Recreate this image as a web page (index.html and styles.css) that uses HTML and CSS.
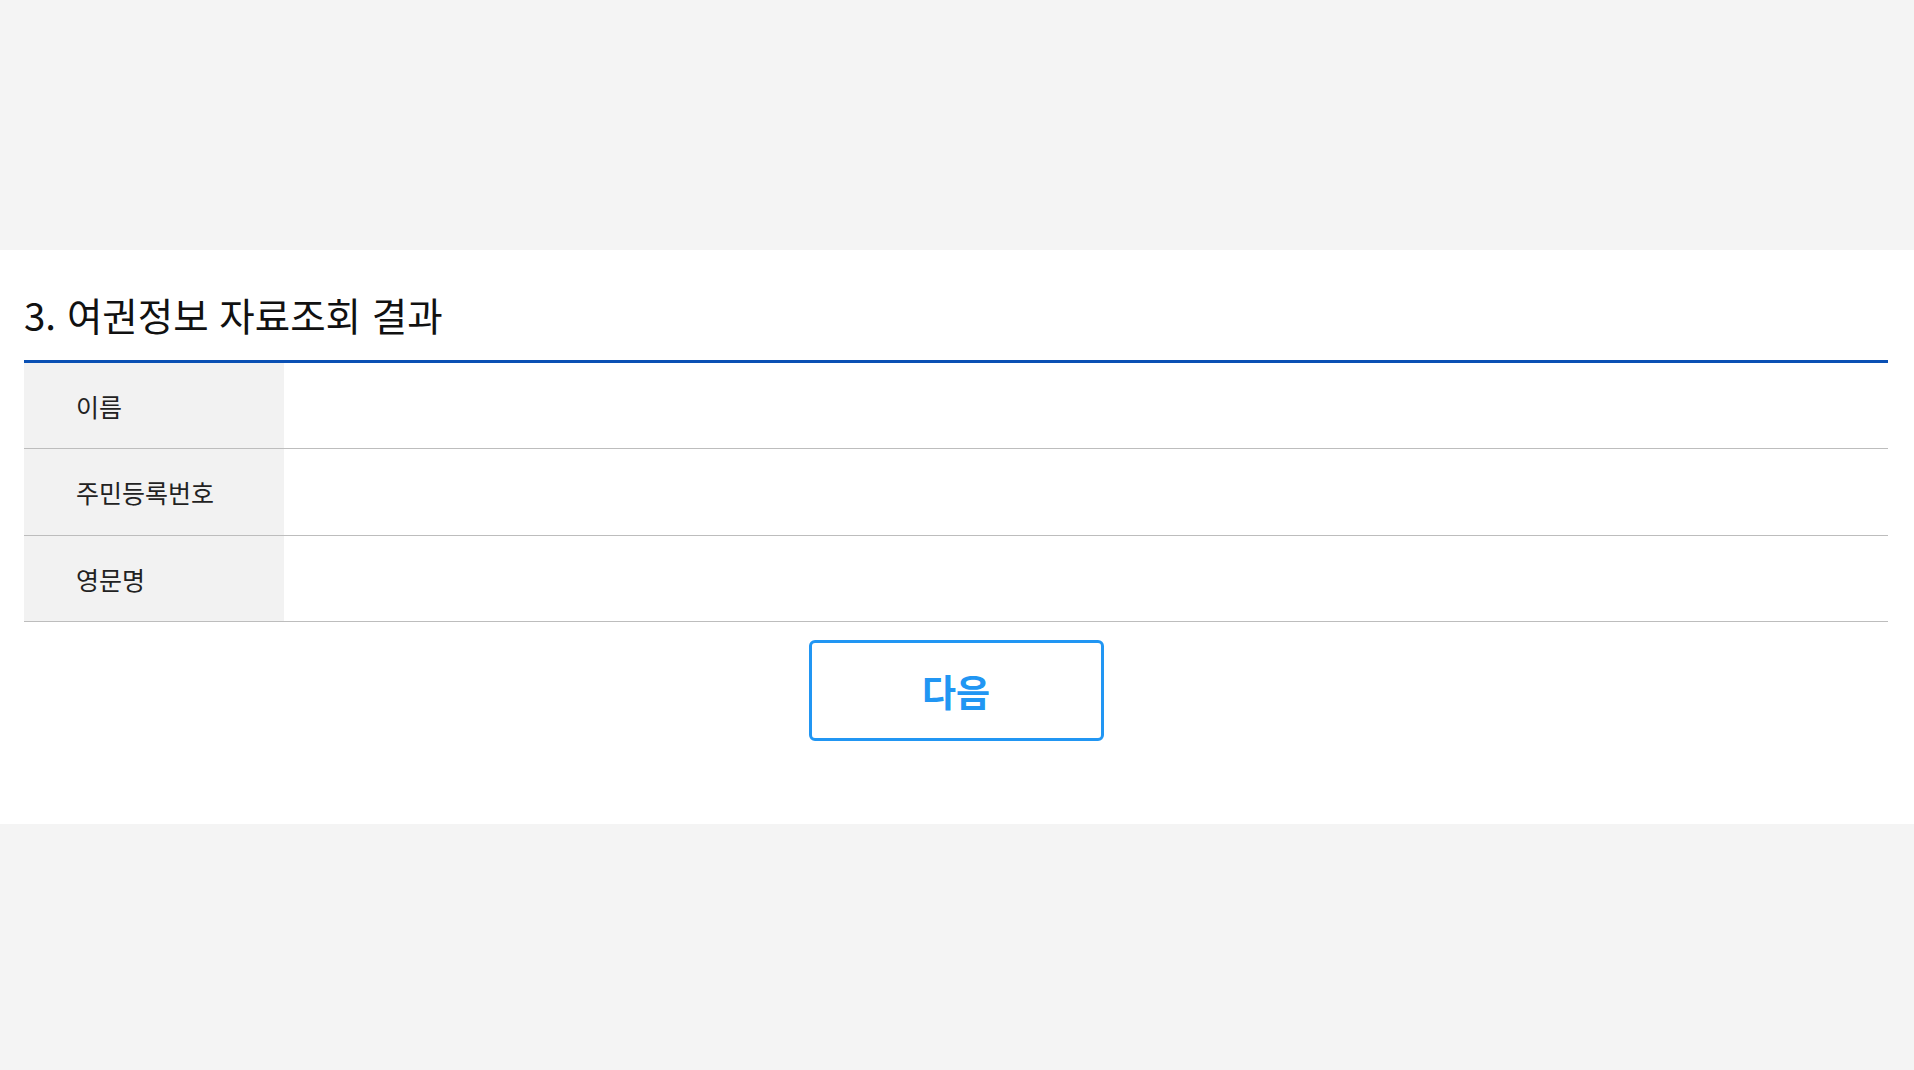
FILE: index.html
```html
<!DOCTYPE html>
<html lang="ko">
<head>
<meta charset="utf-8">
<title>여권정보 자료조회 결과</title>
<link rel="stylesheet" href="styles.css">
</head>
<body>
<div class="page">
  <section class="panel">
    <h2 class="title">3. 여권정보 자료조회 결과</h2>
    <div class="table">
      <div class="row"><div class="th">이름</div><div class="td"></div></div>
      <div class="row"><div class="th">주민등록번호</div><div class="td"></div></div>
      <div class="row"><div class="th">영문명</div><div class="td"></div></div>
    </div>
    <div class="actions">
      <button class="btn" type="button">다음</button>
    </div>
  </section>
</div>
</body>
</html>
```

FILE: styles.css
```css
html, body {
  margin: 0;
  padding: 0;
  background: #f4f4f4;
  font-family: "Noto Sans CJK KR", "Noto Sans", sans-serif;
  color: #111;
}
.page {
  padding-top: 250px;
}
.panel {
  background: #fff;
  height: 574px;
  box-sizing: border-box;
  padding: 0 26px 0 24px;
  display: flex;
  flex-direction: column;
}
.title {
  margin: 0 0 11px;
  padding-top: 29px;
  height: 70px;
  font-size: 38.5px;
  font-weight: 400;
  line-height: 70px;
  letter-spacing: 0;
  color: #111;
}
.table {
  border-top: 3px solid #0a50b4;
}
.row {
  display: flex;
  height: 85px;
  border-bottom: 1px solid #bdbdbd;
}
.row:nth-child(2) {
  height: 86px;
}
.th {
  width: 260px;
  background: #f2f2f2;
  box-sizing: border-box;
  padding-left: 52px;
  display: flex;
  align-items: center;
  font-size: 25px;
  color: #222;
}
.td {
  flex: 1;
}
.actions {
  display: flex;
  justify-content: center;
  padding-top: 18px;
}
.btn {
  width: 295px;
  height: 101px;
  background: #fff;
  border: 3px solid #2196f3;
  border-radius: 6px;
  color: #2196f3;
  font-family: "Noto Sans CJK KR", "Noto Sans", sans-serif;
  font-size: 37px;
  font-weight: 700;
  padding: 0;
}
```
